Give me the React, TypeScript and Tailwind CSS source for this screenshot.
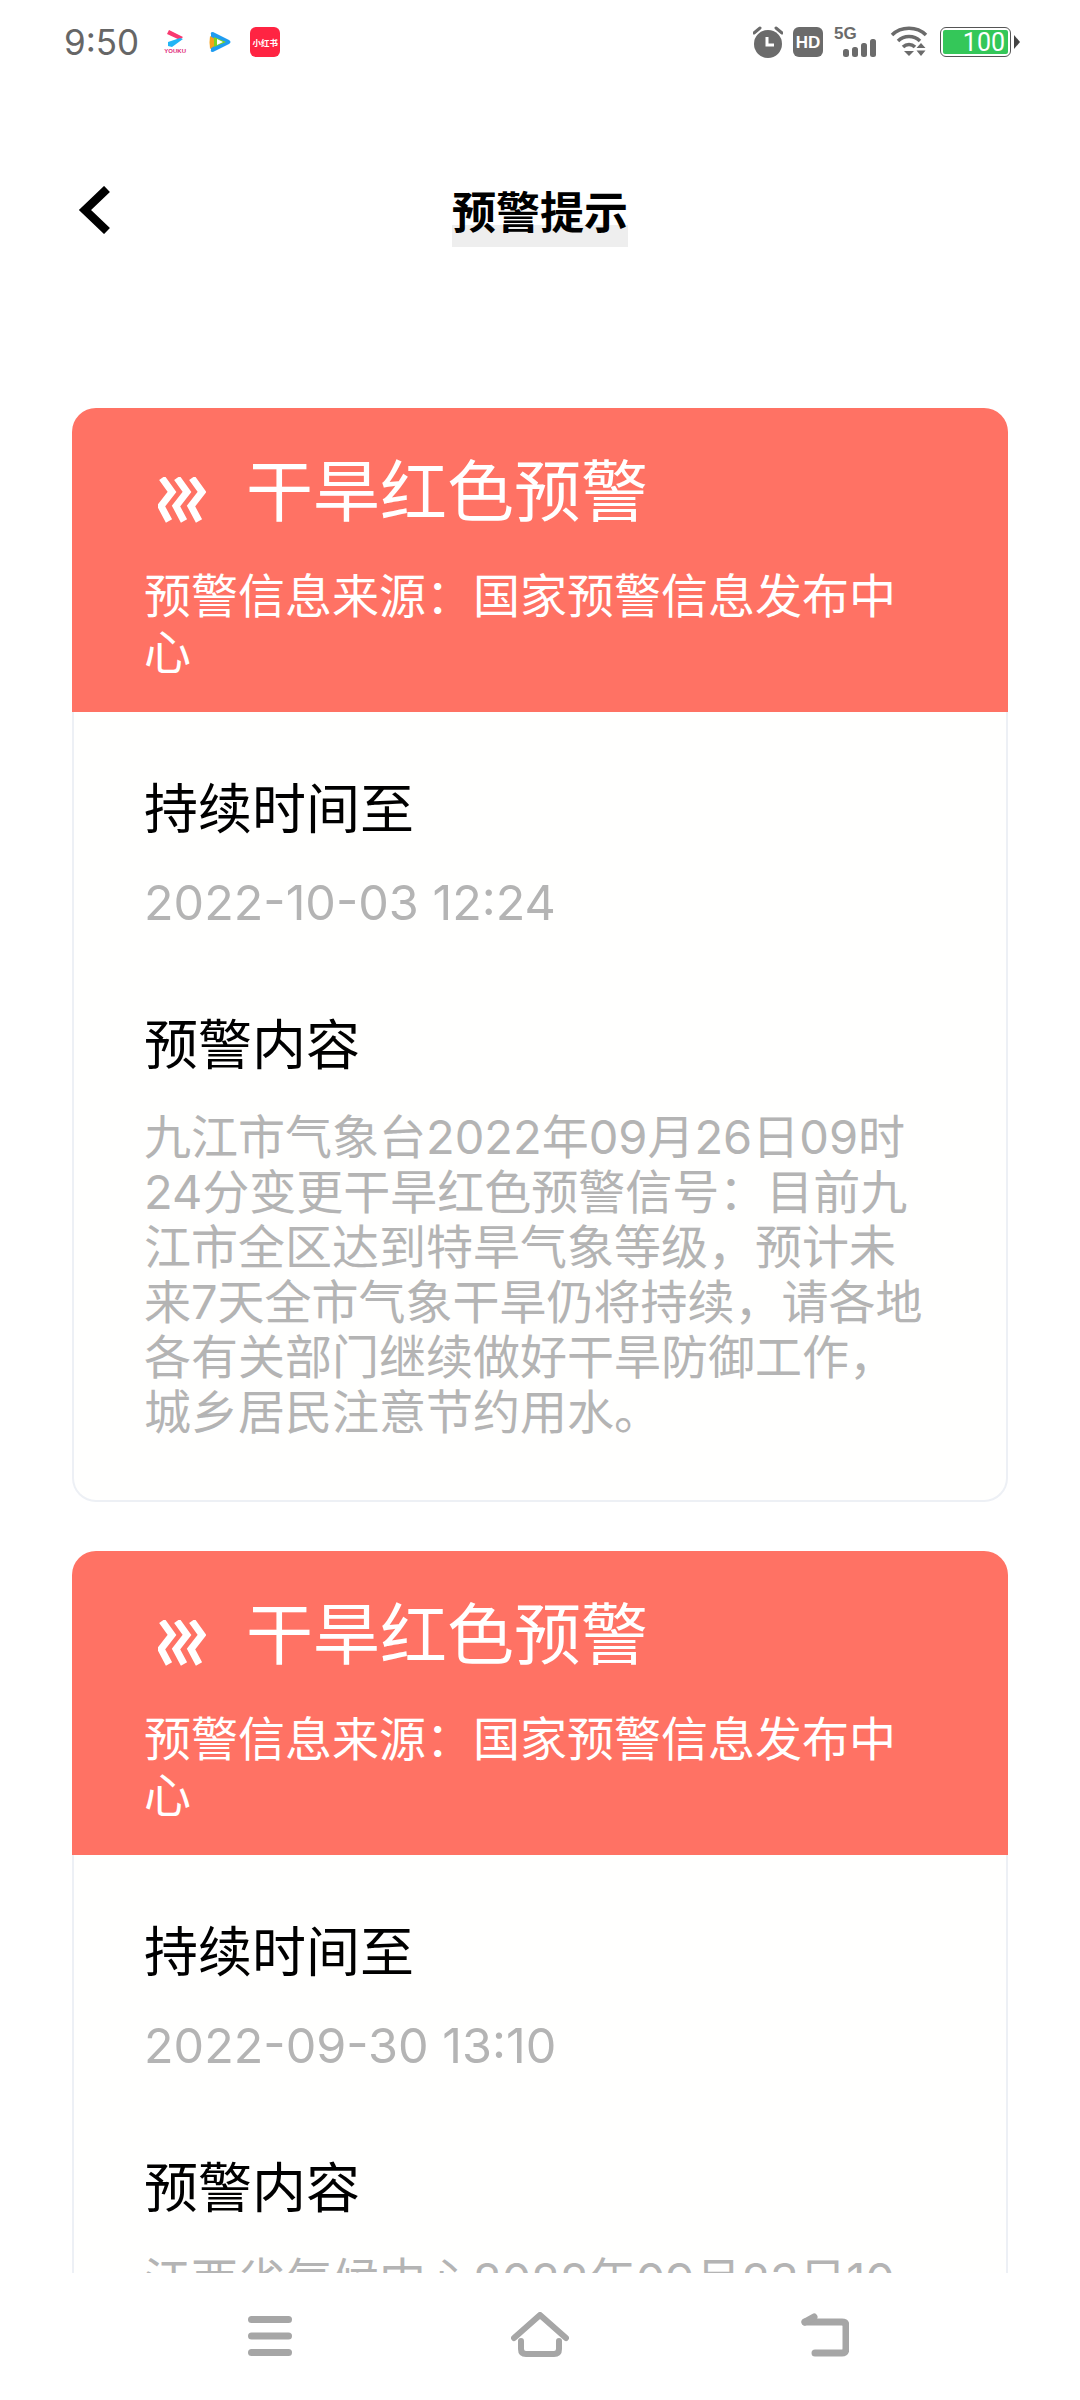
import type { ReactNode } from 'react';

const warnings = [
  {
    until: '2022-10-03 12:24',
    body: '九江市气象台2022年09月26日09时24分变更干旱红色预警信号：目前九江市全区达到特旱气象等级，预计未来7天全市气象干旱仍将持续，请各地各有关部门继续做好干旱防御工作，城乡居民注意节约用水。',
  },
  {
    until: '2022-09-30 13:10',
    body: '江西省气候中心2022年09月23日10时发布干旱红色预警信号：目前全省大部地区达到特旱气象等级，预计未来7天全省气象干旱仍将持续，请各地各有关部门继续做好干旱防御工作，城乡居民注意节约用水。',
  },
];

function StatusIcons() {
  return (
    <div className="flex items-center">
      {/* alarm */}
      <svg width="30" height="32" viewBox="0 0 30 32" fill="#6b6b6b">
        <circle cx="15" cy="18" r="14" />
        <path d="M1 7 L7 2 M29 7 L23 2" stroke="#6b6b6b" strokeWidth="3" strokeLinecap="round" />
        <path d="M14 11 V19 H21" fill="none" stroke="#fff" strokeWidth="3" />
      </svg>
      <div className="ml-[10px] flex h-[30px] w-[30px] items-center justify-center rounded-[6px] bg-[#6b6b6b] font-['Liberation_Sans',sans-serif] text-[17px] font-bold leading-none text-white">
        HD
      </div>
      {/* 5G signal */}
      <div className="relative ml-[11px] h-[32px] w-[46px]">
        <span className="absolute left-0 top-[-1px] font-['Liberation_Sans',sans-serif] text-[17px] font-bold leading-none text-[#6b6b6b]">
          5G
        </span>
        <svg className="absolute left-[8px] top-[13px]" width="36" height="18" viewBox="0 0 36 18" fill="#6b6b6b">
          <rect x="1" y="10" width="6" height="8" rx="2.5" />
          <rect x="10" y="8" width="6" height="10" rx="2.5" />
          <rect x="19" y="4" width="6" height="14" rx="2.5" />
          <rect x="28" y="0" width="6" height="18" rx="2.5" />
        </svg>
      </div>
      {/* wifi */}
      <svg className="ml-[10px]" width="40" height="32" viewBox="0 0 40 32" fill="none" stroke="#6b6b6b" strokeWidth="3.5">
        <path d="M2 9 C11 0 27 0 36 9" />
        <path d="M8 15 C14 9 24 9 30 15" />
        <path d="M13 21 C16.5 17.5 21.5 17.5 25 21" />
        <path d="M14 25 H24 L19 30 Z" fill="#6b6b6b" stroke="none" />
        <path d="M31 17 L35.5 22 H26.5 Z M26.5 24.5 H35.5 L31 30 Z" fill="#6b6b6b" stroke="none" />
      </svg>
      <div className="ml-[10px] flex items-center">
        <div className="h-[30px] w-[71px] rounded-[6px] border-[1.5px] border-[#555] p-[2px]">
          <div className="flex h-full items-center justify-end rounded-[2px] bg-[#34c759] pr-[3px] font-['Roboto',sans-serif] text-[25px] leading-none text-white">
            100
          </div>
        </div>
        <div className="ml-[3px] h-0 w-0 border-y-[7px] border-l-[6px] border-y-transparent border-l-[#444]" />
      </div>
    </div>
  );
}

function AppIcons() {
  return (
    <div className="ml-[25px] flex items-center">
      {/* youku */}
      <div className="flex w-[22px] flex-col items-center">
        <svg width="18" height="18" viewBox="0 0 18 18">
          <path d="M3 0 L17 7 L14 10 L1 4 Z" fill="#f9396f" />
          <path d="M2 12 L14 8 L17 9 L6 17 L2 16 Z" fill="#22b5f5" />
        </svg>
        <span className="font-['Liberation_Sans',sans-serif] text-[6px] font-bold leading-none text-[#e0287a]">YOUKU</span>
      </div>
      {/* tencent video */}
      <svg className="ml-[23px]" width="22" height="20" viewBox="0 0 22 20">
        <path d="M2 2 Q1 0 4 0 L20 8 Q23 10 20 12 L4 20 Q1 20 2 18 Z" fill="#1f9cf0" />
        <path d="M1 4 L11 10 L1 17 Q0 10 1 4 Z" fill="#f7a21b" />
        <path d="M5 5 L17 10 L5 15 Z" fill="#7ed321" />
        <path d="M8 7 L14 10 L8 13 Z" fill="#fff" />
      </svg>
      {/* xiaohongshu */}
      <div className="ml-[19px] flex h-[30px] w-[30px] items-center justify-center rounded-[6px] bg-[#ff2442] font-['Noto_Sans_CJK_SC',sans-serif] text-[8.5px] font-bold leading-none text-white">
        小红书
      </div>
    </div>
  );
}

function SectionLabel({ children }: { children: ReactNode }) {
  return <p className="text-[54px] leading-[64px] text-black">{children}</p>;
}

function WarningCard({ until, body }: { until: string; body: string }) {
  return (
    <section>
      <header className="rounded-t-[24px] bg-[#ff7264] pb-[35px] pl-[72px] pr-[72px] pt-[39px] text-white">
        <div className="flex items-center">
          {/* three zigzag strokes of the alert level mark */}
          <svg width="48" height="46" viewBox="0 0 48 46" fill="none" stroke="#fff" strokeWidth="7" className="ml-[14px] mt-[26px]">
            <path d="M4 1 L14 15 L3 29 L11 44" />
            <path d="M19 1 L29 15 L18 29 L26 44" />
            <path d="M34 1 L44 15 L33 29 L41 44" />
          </svg>
          <h2 className="ml-[40px] text-[67px] font-normal leading-[80px]">干旱红色预警</h2>
        </div>
        <p className="mt-[38px] text-[47px] leading-[56px]">预警信息来源：国家预警信息发布中心</p>
      </header>
      <div className="rounded-b-[24px] border-x-[2px] border-b-[2px] border-[#edf0f5] bg-[#fffffe] pb-[61px] pl-[70px] pr-[72px] pt-[62px]">
        <SectionLabel>持续时间至</SectionLabel>
        <p className="mt-[37px] font-['Inter','Noto_Sans_CJK_SC',sans-serif] text-[48.5px] leading-[56px] text-[#b4b4b4]">{until}</p>
        <div className="mt-[79px]">
          <SectionLabel>预警内容</SectionLabel>
        </div>
        <p className="mt-[35px] font-['Inter','Noto_Sans_CJK_SC',sans-serif] text-[47px] leading-[55px] text-[#b4b4b4]">{body}</p>
      </div>
    </section>
  );
}

export default function App() {
  return (
    <div className="relative h-[2400px] w-[1080px] overflow-hidden bg-white font-['Noto_Sans_CJK_SC',sans-serif]">
      <div className="flex h-[84px] items-center justify-between pl-[64px] pr-[60px]">
        <div className="flex items-center">
          <span className="font-['Inter',sans-serif] text-[35px] leading-none text-[#666]">9:50</span>
          <AppIcons />
        </div>
        <StatusIcons />
      </div>

      <div className="relative mt-[86px] flex h-[80px] items-center justify-center">
        <svg className="absolute left-[78px] top-[16px]" width="32" height="48" viewBox="0 0 32 48" fill="none" stroke="#000" strokeWidth="8.5">
          <path d="M29 3 L7 24 L29 45" />
        </svg>
        <h1 className="bg-[linear-gradient(to_bottom,transparent_70%,#eeeeee_70%)] text-[44px] font-bold leading-[74px] text-black">预警提示</h1>
      </div>

      <div className="mt-[158px] flex flex-col gap-[49px] px-[72px]">
        {warnings.map((w) => (
          <WarningCard key={w.until} until={w.until} body={w.body} />
        ))}
      </div>

      {/* system navigation bar, sits over the scrolled list */}
      <nav className="absolute inset-x-0 bottom-0 flex h-[127px] items-start justify-between bg-white pl-[248px] pr-[231px] pt-[39px]">
        <svg className="mt-[4px]" width="44" height="40" viewBox="0 0 44 40" fill="#a6a6a6">
          <rect x="0" y="0" width="44" height="7" rx="3.5" />
          <rect x="0" y="16.5" width="44" height="7" rx="3.5" />
          <rect x="0" y="33" width="44" height="7" rx="3.5" />
        </svg>
        <svg className="mr-[14px]" width="58" height="45" viewBox="0 0 58 45" fill="none" stroke="#a6a6a6" strokeWidth="6" strokeLinecap="round" strokeLinejoin="round">
          <path d="M3 26 L29 3 L55 26" />
          <path d="M10 29 V37 Q10 42 15 42 H43 Q48 42 48 37 V29" />
        </svg>
        <svg width="48" height="45" viewBox="0 0 48 45" fill="none" stroke="#a6a6a6" strokeWidth="7" strokeLinecap="round" strokeLinejoin="round">
          <path d="M4 10 H41 Q45 10 45 14 V36 Q45 41 41 41 H14" />
          <path d="M4 10 L13 5" />
        </svg>
      </nav>
    </div>
  );
}
